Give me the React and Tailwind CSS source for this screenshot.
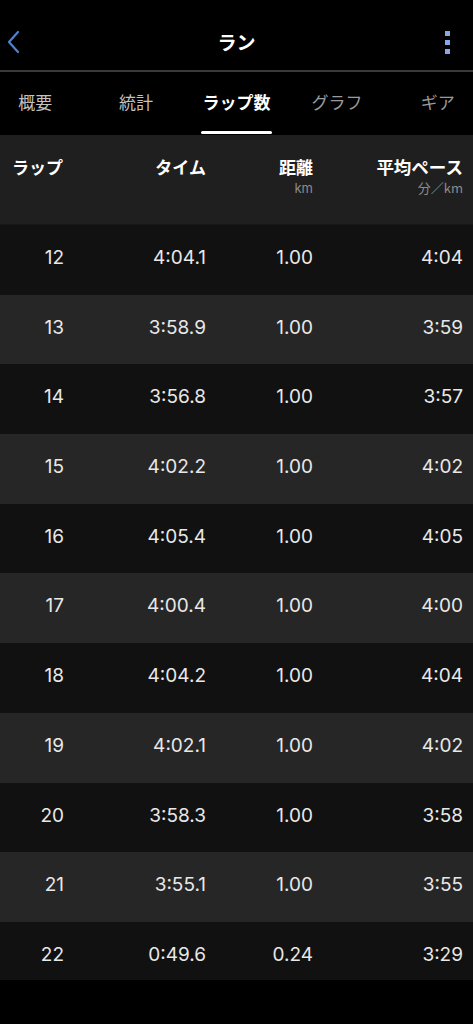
import React from "react";

const laps = [
  ["12", "4:04.1", "1.00", "4:04"],
  ["13", "3:58.9", "1.00", "3:59"],
  ["14", "3:56.8", "1.00", "3:57"],
  ["15", "4:02.2", "1.00", "4:02"],
  ["16", "4:05.4", "1.00", "4:05"],
  ["17", "4:00.4", "1.00", "4:00"],
  ["18", "4:04.2", "1.00", "4:04"],
  ["19", "4:02.1", "1.00", "4:02"],
  ["20", "3:58.3", "1.00", "3:58"],
  ["21", "3:55.1", "1.00", "3:55"],
  ["22", "0:49.6", "0.24", "3:29"],
];

const jp = { fontFamily: '"Noto Sans CJK JP", "Noto Sans", sans-serif' };
const num = { fontFamily: 'Inter, "Noto Sans", sans-serif' };

export default function App() {
  return (
    <div className="w-[473px] h-[1024px] bg-black overflow-hidden text-white" style={jp}>
      {/* Top bar */}
      <div className="h-[70px] flex items-center justify-between px-[6px] relative">
        <svg width="16" height="26" viewBox="0 0 16 26" className="mt-[14px]">
          <path d="M12 3 L3 13 L12 23" fill="none" stroke="#4f82cf" strokeWidth="2.2" strokeLinecap="round" strokeLinejoin="round" />
        </svg>
        <div className="absolute left-0 right-0 top-[26px] text-center text-[19px] font-bold leading-[32px]">ラン</div>
        <div className="flex flex-col gap-[4px] mt-[14px] mr-[17px]">
          <div className="w-[5px] h-[5px] bg-[#86a9e6]" />
          <div className="w-[5px] h-[5px] bg-[#86a9e6]" />
          <div className="w-[5px] h-[5px] bg-[#86a9e6]" />
        </div>
      </div>
      <div className="h-[2px] bg-[#3a3a3a]" />
      {/* Tabs */}
      <div className="h-[63px] overflow-hidden">
        <div className="grid grid-cols-5 w-[503px] ml-[-15px] h-full">
          {["概要", "統計", "ラップ数", "グラフ", "ギア"].map((t, i) => (
            <div key={t} className="flex flex-col items-center h-full">
              <div
                className={
                  "mt-[16px] text-[17px] leading-[28px] " +
                  (i === 2 ? "text-white font-bold" : i < 2 ? "text-[#c2c2c2]" : "text-[#9a9a9a]")
                }
              >
                {t}
              </div>
              {i === 2 && <div className="mt-auto mb-[1px] w-[71px] h-[3px] rounded-full bg-white" />}
            </div>
          ))}
        </div>
      </div>
      {/* Header */}
      <div className="h-[89px] bg-[#1f1f1f] flex pt-[19px] px-[10px]">
        <div className="w-[55px] pl-[2px] text-[17px] font-bold leading-[26px] whitespace-nowrap">ラップ</div>
        <div className="w-[141px] text-right text-[17px] font-bold leading-[26px]">タイム</div>
        <div className="w-[107px] text-right">
          <div className="text-[17px] font-bold leading-[26px]">距離</div>
          <div className="text-[13px] text-[#8c8c8c] leading-[16px]" style={num}>km</div>
        </div>
        <div className="flex-1 text-right">
          <div className="text-[17.5px] font-bold leading-[26px] whitespace-nowrap">平均ペース</div>
          <div className="text-[13px] text-[#8c8c8c] leading-[16px]">分／km</div>
        </div>
      </div>
      <div className="h-[1px] bg-[#171717]" />
      {/* Rows */}
      {laps.map((r, i) => (
        <div
          key={r[0]}
          className={
            "flex items-start pt-[20px] px-[10px] text-[19px] text-[#e8e8e8] leading-[26px] " +
            (i % 2 === 0 ? "bg-[#111111] " : "bg-[#262626] ") +
            (i === laps.length - 1 ? "h-[58px]" : "h-[69.7px]")
          }
          style={num}
        >
          <div className="w-[54px] text-right">{r[0]}</div>
          <div className="w-[142px] text-right">{r[1]}</div>
          <div className="w-[107px] text-right">{r[2]}</div>
          <div className="flex-1 text-right">{r[3]}</div>
        </div>
      ))}
    </div>
  );
}
